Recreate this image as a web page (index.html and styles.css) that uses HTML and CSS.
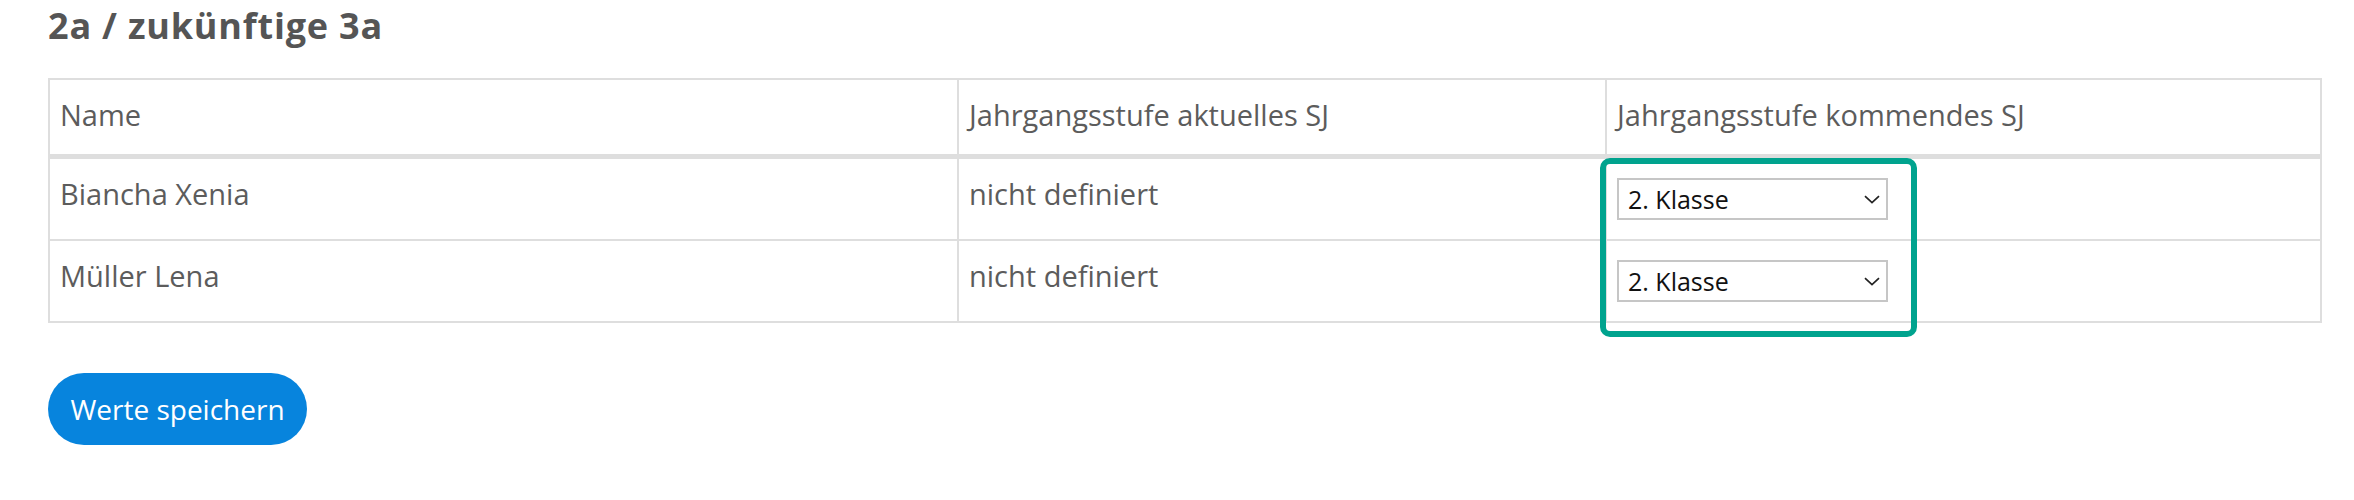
FILE: index.html
```html
<!DOCTYPE html>
<html lang="de">
<head>
<meta charset="utf-8">
<title>2a / zukünftige 3a</title>
<link rel="stylesheet" href="styles.css">
</head>
<body>
<main class="page">
  <h2 class="title">2a / zukünftige 3a</h2>
  <div class="table-wrap">
    <table class="grades">
      <thead>
        <tr>
          <th class="col-name">Name</th>
          <th class="col-current">Jahrgangsstufe aktuelles SJ</th>
          <th class="col-next">Jahrgangsstufe kommendes SJ</th>
        </tr>
      </thead>
      <tbody>
        <tr>
          <td>Biancha Xenia</td>
          <td>nicht definiert</td>
          <td class="select-cell">
            <div class="select-wrap">
              <select class="grade-select"><option>2. Klasse</option><option>3. Klasse</option></select>
              <svg class="chevron" width="16" height="9" viewBox="0 0 16 9"><path d="M1 1.2 L8 7.6 L15 1.2" fill="none" stroke="#222" stroke-width="1.7"/></svg>
            </div>
          </td>
        </tr>
        <tr>
          <td>Müller Lena</td>
          <td>nicht definiert</td>
          <td class="select-cell">
            <div class="select-wrap">
              <select class="grade-select"><option>2. Klasse</option><option>3. Klasse</option></select>
              <svg class="chevron" width="16" height="9" viewBox="0 0 16 9"><path d="M1 1.2 L8 7.6 L15 1.2" fill="none" stroke="#222" stroke-width="1.7"/></svg>
            </div>
          </td>
        </tr>
      </tbody>
    </table>
    <div class="highlight"></div>
  </div>
  <button class="save-btn" type="button">Werte speichern</button>
</main>
</body>
</html>
```
FILE: styles.css
```css
html, body {
  margin: 0;
  padding: 0;
  background: #ffffff;
}

.page {
  padding: 2px 32px 0 48px;
  font-family: "Open Sans", "Noto Sans", sans-serif;
  color: #5c5c5c;
}

.title {
  margin: 0 0 28px;
  font-size: 36px;
  line-height: 48px;
  font-weight: 700;
  letter-spacing: 0.8px;
  color: #555555;
}

.table-wrap {
  position: relative;
}

.grades {
  width: 100%;
  table-layout: fixed;
  border-collapse: separate;
  border-spacing: 0;
  border-top: 2px solid #dedede;
  border-left: 2px solid #dedede;
  box-sizing: border-box;
  font-size: 29px;
  line-height: 42px;
}

.grades th,
.grades td {
  box-sizing: border-box;
  padding: 14px 10px 24px;
  text-align: left;
  vertical-align: top;
  font-weight: 400;
  border-right: 2px solid #dedede;
  border-bottom: 2px solid #dedede;
}

.grades th {
  padding-bottom: 18px;
  border-bottom-width: 5px;
}

.col-name { width: 909px; }
.col-current { width: 648px; }
.col-next { width: 715px; }

.grades td.select-cell {
  padding: 19px 10px 19px;
}

.select-wrap {
  position: relative;
  width: 271px;
}

.grade-select {
  display: block;
  width: 271px;
  height: 42px;
  margin: 0;
  padding: 0 30px 0 9px;
  box-sizing: border-box;
  border: 2px solid #c6c6c6;
  border-radius: 0;
  background: #ffffff;
  color: #111111;
  font-family: "Open Sans", "Noto Sans", sans-serif;
  font-size: 25px;
  line-height: 38px;
  -webkit-appearance: none;
  appearance: none;
}

.chevron {
  position: absolute;
  right: 8px;
  top: 17px;
  pointer-events: none;
}

.highlight {
  position: absolute;
  left: 1552px;
  top: 80px;
  width: 317px;
  height: 179px;
  box-sizing: border-box;
  border: 6px solid #00a38e;
  border-radius: 10px;
  pointer-events: none;
}

.save-btn {
  display: block;
  margin-top: 50px;
  height: 72px;
  width: 259px;
  padding: 0;
  border: none;
  border-radius: 36px;
  background: #0784dd;
  color: #ffffff;
  font-family: "Open Sans", "Noto Sans", sans-serif;
  font-size: 28px;
  line-height: 72px;
  text-align: center;
}
```
